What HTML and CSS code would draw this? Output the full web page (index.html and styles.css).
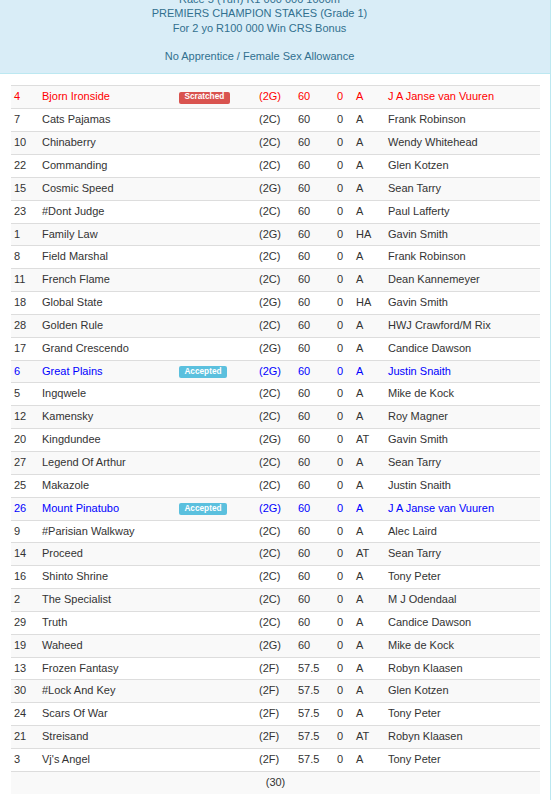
FILE: index.html
```html
<!DOCTYPE html>
<html>
<head>
<meta charset="utf-8">
<link rel="stylesheet" href="styles.css">
</head>
<body>
<div class="panel">
  <div class="panel-heading">
    <div class="heading-text">
      Race 5 (Turf) R1 000 000 1000m<br>
      PREMIERS CHAMPION STAKES (Grade 1)<br>
      For 2 yo R100 000 Win CRS Bonus<br>
      <br>
      No Apprentice / Female Sex Allowance
    </div>
  </div>
  <div class="panel-body">
    <table class="runners">
      <colgroup>
        <col class="c-no"><col class="c-name"><col class="c-badge"><col class="c-sex"><col class="c-wt"><col class="c-draw"><col class="c-eq"><col class="c-trainer">
      </colgroup>
      <tbody>
        <tr class="scratched"><td>4</td><td>Bjorn Ironside</td><td><span class="label label-danger">Scratched</span></td><td>(2G)</td><td>60</td><td>0</td><td>A</td><td>J A Janse van Vuuren</td></tr>
        <tr><td>7</td><td>Cats Pajamas</td><td></td><td>(2C)</td><td>60</td><td>0</td><td>A</td><td>Frank Robinson</td></tr>
        <tr><td>10</td><td>Chinaberry</td><td></td><td>(2C)</td><td>60</td><td>0</td><td>A</td><td>Wendy Whitehead</td></tr>
        <tr><td>22</td><td>Commanding</td><td></td><td>(2C)</td><td>60</td><td>0</td><td>A</td><td>Glen Kotzen</td></tr>
        <tr><td>15</td><td>Cosmic Speed</td><td></td><td>(2G)</td><td>60</td><td>0</td><td>A</td><td>Sean Tarry</td></tr>
        <tr><td>23</td><td>#Dont Judge</td><td></td><td>(2C)</td><td>60</td><td>0</td><td>A</td><td>Paul Lafferty</td></tr>
        <tr><td>1</td><td>Family Law</td><td></td><td>(2G)</td><td>60</td><td>0</td><td>HA</td><td>Gavin Smith</td></tr>
        <tr><td>8</td><td>Field Marshal</td><td></td><td>(2C)</td><td>60</td><td>0</td><td>A</td><td>Frank Robinson</td></tr>
        <tr><td>11</td><td>French Flame</td><td></td><td>(2C)</td><td>60</td><td>0</td><td>A</td><td>Dean Kannemeyer</td></tr>
        <tr><td>18</td><td>Global State</td><td></td><td>(2G)</td><td>60</td><td>0</td><td>HA</td><td>Gavin Smith</td></tr>
        <tr><td>28</td><td>Golden Rule</td><td></td><td>(2C)</td><td>60</td><td>0</td><td>A</td><td>HWJ Crawford/M Rix</td></tr>
        <tr><td>17</td><td>Grand Crescendo</td><td></td><td>(2G)</td><td>60</td><td>0</td><td>A</td><td>Candice Dawson</td></tr>
        <tr class="accepted"><td>6</td><td>Great Plains</td><td><span class="label label-info">Accepted</span></td><td>(2G)</td><td>60</td><td>0</td><td>A</td><td>Justin Snaith</td></tr>
        <tr><td>5</td><td>Ingqwele</td><td></td><td>(2C)</td><td>60</td><td>0</td><td>A</td><td>Mike de Kock</td></tr>
        <tr><td>12</td><td>Kamensky</td><td></td><td>(2C)</td><td>60</td><td>0</td><td>A</td><td>Roy Magner</td></tr>
        <tr><td>20</td><td>Kingdundee</td><td></td><td>(2G)</td><td>60</td><td>0</td><td>AT</td><td>Gavin Smith</td></tr>
        <tr><td>27</td><td>Legend Of Arthur</td><td></td><td>(2C)</td><td>60</td><td>0</td><td>A</td><td>Sean Tarry</td></tr>
        <tr><td>25</td><td>Makazole</td><td></td><td>(2C)</td><td>60</td><td>0</td><td>A</td><td>Justin Snaith</td></tr>
        <tr class="accepted"><td>26</td><td>Mount Pinatubo</td><td><span class="label label-info">Accepted</span></td><td>(2G)</td><td>60</td><td>0</td><td>A</td><td>J A Janse van Vuuren</td></tr>
        <tr><td>9</td><td>#Parisian Walkway</td><td></td><td>(2C)</td><td>60</td><td>0</td><td>A</td><td>Alec Laird</td></tr>
        <tr><td>14</td><td>Proceed</td><td></td><td>(2C)</td><td>60</td><td>0</td><td>AT</td><td>Sean Tarry</td></tr>
        <tr><td>16</td><td>Shinto Shrine</td><td></td><td>(2C)</td><td>60</td><td>0</td><td>A</td><td>Tony Peter</td></tr>
        <tr><td>2</td><td>The Specialist</td><td></td><td>(2C)</td><td>60</td><td>0</td><td>A</td><td>M J Odendaal</td></tr>
        <tr><td>29</td><td>Truth</td><td></td><td>(2C)</td><td>60</td><td>0</td><td>A</td><td>Candice Dawson</td></tr>
        <tr><td>19</td><td>Waheed</td><td></td><td>(2G)</td><td>60</td><td>0</td><td>A</td><td>Mike de Kock</td></tr>
        <tr><td>13</td><td>Frozen Fantasy</td><td></td><td>(2F)</td><td>57.5</td><td>0</td><td>A</td><td>Robyn Klaasen</td></tr>
        <tr><td>30</td><td>#Lock And Key</td><td></td><td>(2F)</td><td>57.5</td><td>0</td><td>A</td><td>Glen Kotzen</td></tr>
        <tr><td>24</td><td>Scars Of War</td><td></td><td>(2F)</td><td>57.5</td><td>0</td><td>A</td><td>Tony Peter</td></tr>
        <tr><td>21</td><td>Streisand</td><td></td><td>(2F)</td><td>57.5</td><td>0</td><td>AT</td><td>Robyn Klaasen</td></tr>
        <tr><td>3</td><td>Vj's Angel</td><td></td><td>(2F)</td><td>57.5</td><td>0</td><td>A</td><td>Tony Peter</td></tr>
        <tr class="total"><td colspan="8">(30)</td></tr>
      </tbody>
    </table>
  </div>
</div>
</body>
</html>
```
FILE: styles.css
```css
html, body {
  margin: 0;
  padding: 0;
  background: #fff;
}
body {
  font-family: "Liberation Sans", Arial, Helvetica, sans-serif;
  font-size: 11px;
  color: #333;
  overflow: hidden;
}
.panel {
  width: 550px;
  margin-left: -1px;
  border: 1px solid #bce8f1;
  border-top: none;
  background: #fff;
}
.panel-heading {
  margin-top: -18px;
  padding: 10px 31px 10px 0;
  background: #d9edf7;
  border-bottom: 1px solid #bce8f1;
  color: #31708f;
}
.heading-text {
  text-align: center;
  line-height: 14.3px;
}
.panel-body {
  padding: 11px 11px 10px 11px;
}
.runners {
  width: 529px;
  border-collapse: collapse;
  table-layout: fixed;
}
.c-no { width: 28px; }
.c-name { width: 137px; }
.c-badge { width: 80px; }
.c-sex { width: 39px; }
.c-wt { width: 39px; }
.c-draw { width: 19px; }
.c-eq { width: 32px; }
.c-trainer { width: 155px; }
.runners td {
  padding: 3px 3px;
  line-height: 15.85px;
  border-top: 1px solid #ddd;
  white-space: nowrap;
  overflow: hidden;
  vertical-align: middle;
}
.runners tr:nth-child(odd) {
  background: #f9f9f9;
}
.runners tr.scratched td {
  color: #ff0000;
}
.runners tr.accepted td {
  color: #0000ff;
}
.runners tr.total td {
  text-align: center;
}
.label {
  display: inline-block;
  font-size: 8.25px;
  font-weight: bold;
  line-height: 1;
  color: #fff;
  padding: 1.7px 5.4px 2.5px;
  border-radius: 2px;
  vertical-align: 1px;
}
.label-danger {
  background: #d9534f;
}
.label-info {
  background: #5bc0de;
}
```
